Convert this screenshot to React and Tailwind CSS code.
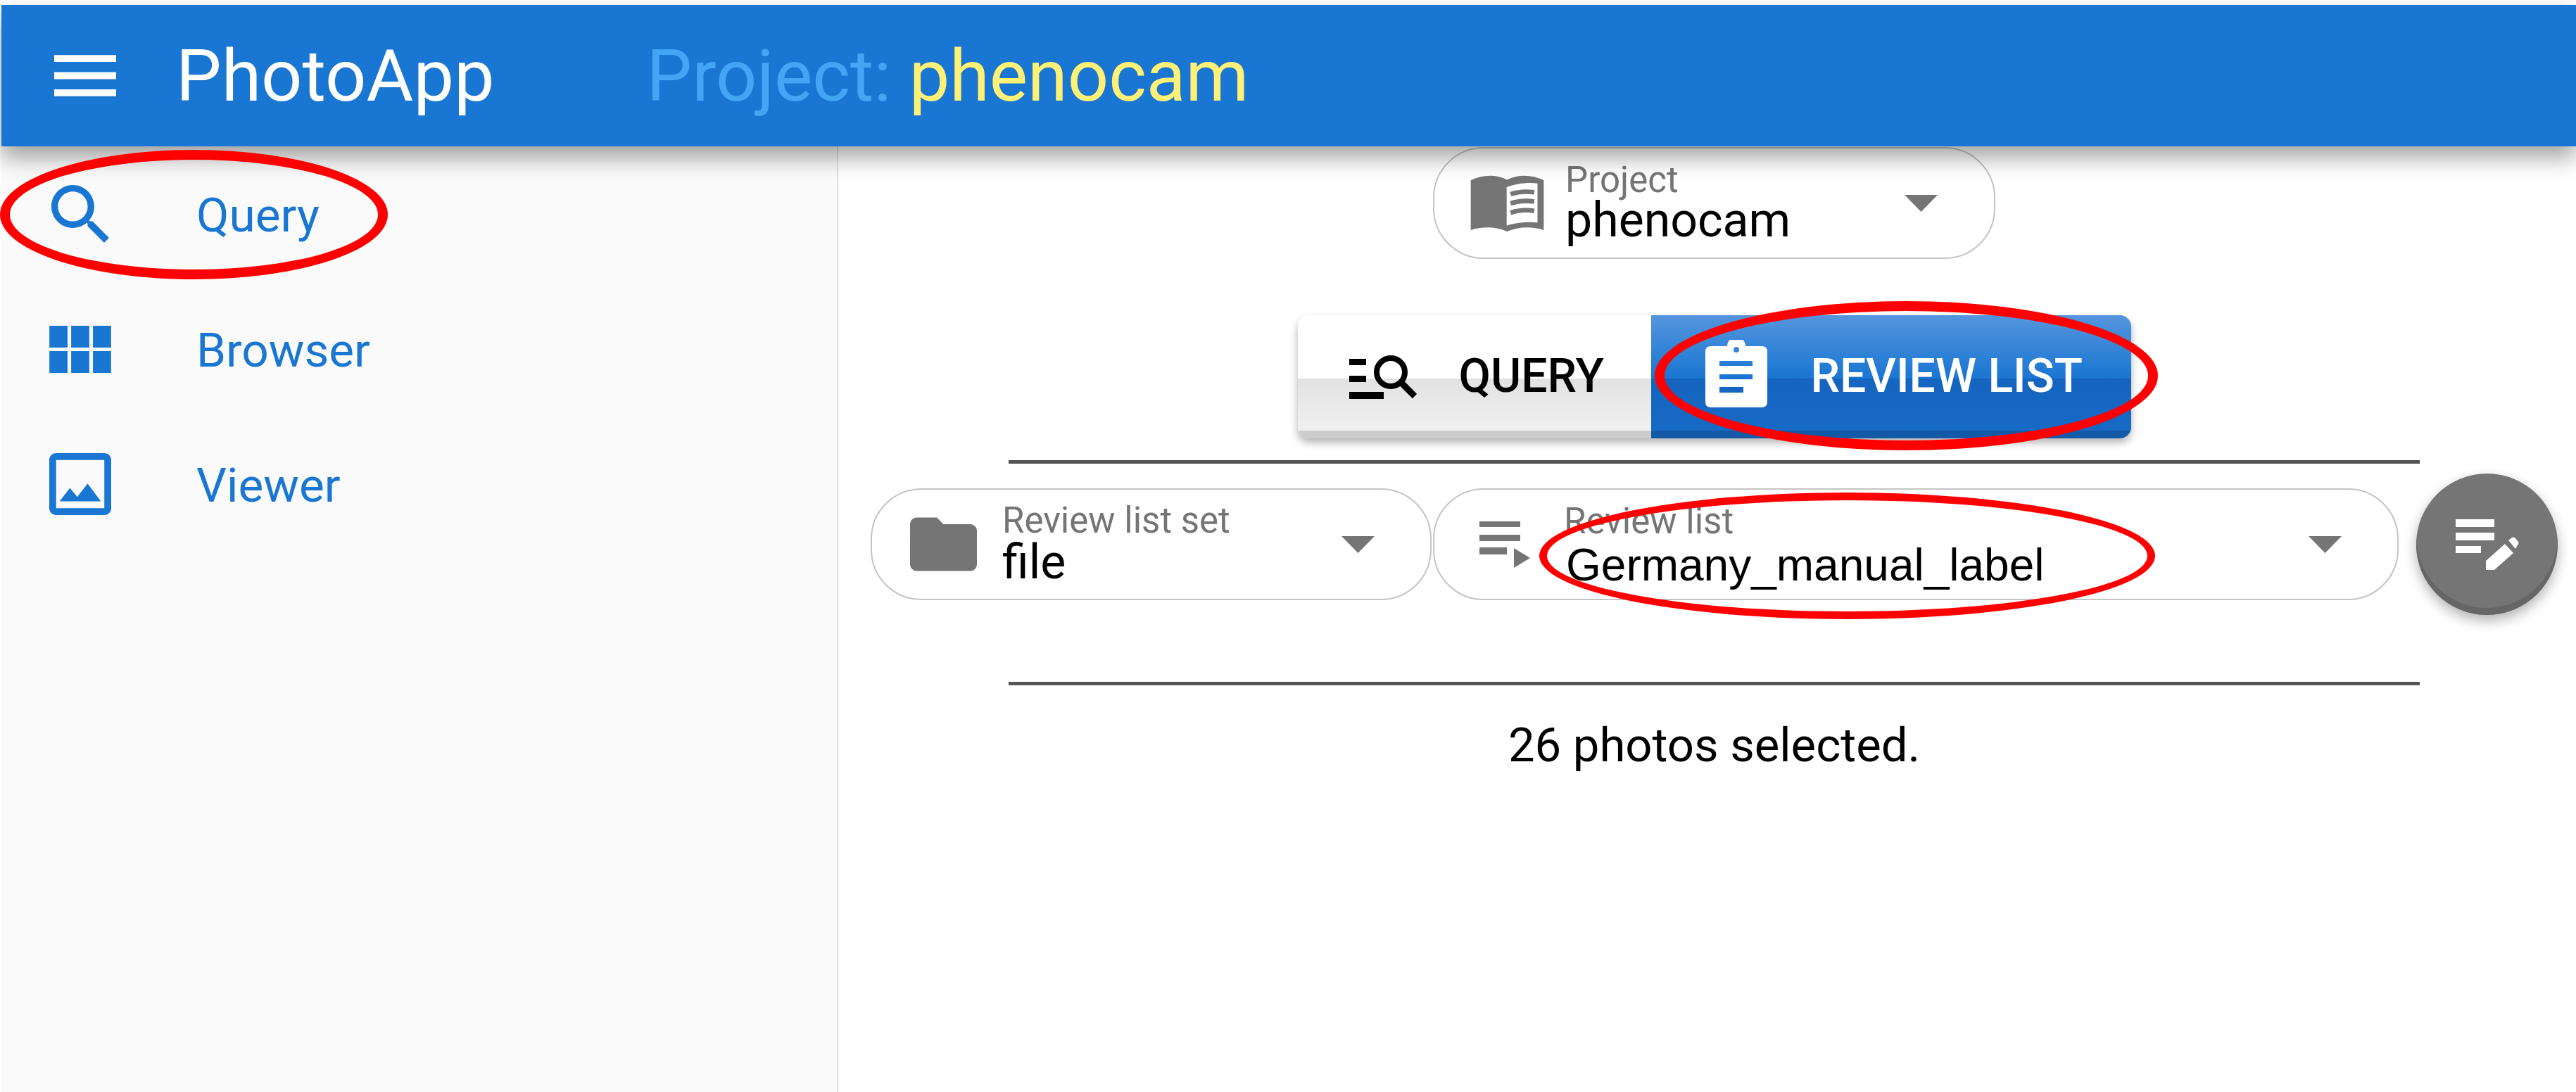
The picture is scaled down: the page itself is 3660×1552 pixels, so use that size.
import React from "react";

const Arrow = () => (
  <svg width="47" height="24" viewBox="0 0 47 24" className="shrink-0 ml-auto"><path d="M0 0H47L23.5 24Z" fill="#757575" /></svg>
);

const Pill = ({ icon, label, value, className, valueClass }) => (
  <div className={`h-[159px] border-2 border-[#c4c4c4] rounded-[72px] flex items-center bg-white shrink-0 ${className}`}>
    {icon}
    <div className="flex flex-col">
      <span className="text-[51px] leading-[49px] text-[#757575]">{label}</span>
      <span className={valueClass || "text-[68px] leading-[66px] text-black"}>{value}</span>
    </div>
    <Arrow />
  </div>
);

const NavItem = ({ icon, label }) => (
  <div className="h-[192px] flex items-center pl-[67px]">
    <div className="w-[90px] flex justify-center shrink-0">{icon}</div>
    <span className="ml-[120px] mt-[3px] text-[67.5px] text-[#1976d2]">{label}</span>
  </div>
);

export default function App() {
  return (
    <div className="relative h-[1552px] w-[3660px] overflow-hidden bg-white pt-[7px] pl-[2px] font-['Roboto',sans-serif]">
      <header className="relative z-10 h-[201px] bg-[#1976d2] flex items-center pl-[75px] shadow-[0_16px_30px_rgba(0,0,0,0.36)]">
        <svg width="88" height="59" viewBox="3 6 18 12" fill="#fff" className="shrink-0"><path d="M3 18h18v-2H3v2zm0-5h18v-2H3v2zm0-7v2h18V6H3z" /></svg>
        <span className="ml-[85px] mt-[3px] text-[102.5px] text-white">PhotoApp</span>
        <span className="ml-[216px] mt-[3px] text-[102.5px] text-[#42a5f5]">Project: <span className="text-[#fff176]">phenocam</span></span>
      </header>

      <div className="flex h-[1344px]">
        <aside className="w-[1189px] shrink-0 bg-[#fafafa] border-r-2 border-[#e0e0e0]">
          <NavItem label="Query" icon={
            <svg width="82" height="84" viewBox="3 3 17.5 17.5" fill="#1976d2"><path d="M15.5 14h-.79l-.28-.27C15.41 12.59 16 11.11 16 9.5 16 5.91 13.09 3 9.5 3S3 5.91 3 9.5 5.91 16 9.5 16c1.61 0 3.09-.59 4.23-1.57l.27.28v.79l5 4.99L20.49 19l-4.99-5zm-6 0C7.01 14 5 11.99 5 9.5S7.01 5 9.5 5 14 7.01 14 9.5 11.99 14 9.5 14z" /></svg>
          } />
          <NavItem label="Browser" icon={
            <svg width="88" height="67" viewBox="4 5 17 13" fill="#1976d2"><path d="M4 11h5V5H4v6zm0 7h5v-6H4v6zm6 0h5v-6h-5v6zm6 0h5v-6h-5v6zm-6-7h5V5h-5v6zm6-6v6h5V5h-5z" /></svg>
          } />
          <NavItem label="Viewer" icon={
            <svg width="88" height="88" viewBox="3 3 18 18" fill="#1976d2"><path d="M19 5v14H5V5h14m0-2H5c-1.1 0-2 .9-2 2v14c0 1.1.9 2 2 2h14c1.1 0 2-.9 2-2V5c0-1.1-.9-2-2-2zm-4.86 8.86l-3 3.87L9 13.14 6 17h12l-3.86-5.14z" /></svg>
          } />
        </aside>

        <main className="flex-1 pl-[46px] pr-[26px] flex flex-col items-center pt-[1px]">
          <Pill
            className="w-[799px] pl-[51px] pr-[80px]"
            label="Project"
            value="phenocam"
            icon={
              <svg width="105" height="80" viewBox="0 0 315 243" className="shrink-0 mr-[30px]">
                <path d="M0 22C50-2 110-5 157 20C205-5 265-2 315 22V237C265 220 205 222 157 243C110 222 50 220 0 237Z" fill="#757575" />
                <path d="M155 52C195 36 250 30 288 36V205C250 200 195 204 155 218Z" fill="#fff" />
                <path d="M172 82Q220 66 274 74M172 122Q220 106 274 114M172 162Q220 146 274 154" stroke="#757575" strokeWidth="20" fill="none" />
              </svg>
            }
          />

          <div className="mt-[80px] flex h-[175px] rounded-[16px] overflow-hidden shadow-[0_6px_12px_rgba(0,0,0,0.3)]">
            <div className="w-[502px] flex items-center pl-[73px] pb-[9px] bg-[linear-gradient(to_bottom,#fff_0,#fff_90px,#e2e2e2_90px,#f0f0f0_164px,#ccc_164px,#ccc_175px)]">
              <svg width="96" height="65" viewBox="1916 505 96 65" className="shrink-0 mt-[11px]">
                <path d="M1916 511H1940V520H1916ZM1916 535H1940V544H1916ZM1916 558H1965V568H1916Z" fill="#000" />
                <circle cx="1975" cy="530" r="20" stroke="#000" strokeWidth="8" fill="none" />
                <path d="M1990 545L2009 564" stroke="#000" strokeWidth="9" />
              </svg>
              <span className="ml-[60px] mt-[6px] text-[66px] font-medium text-black">QUERY</span>
            </div>
            <div className="w-[682px] flex items-center pl-[77px] pb-[9px] bg-[linear-gradient(to_bottom,#5595dd_0,#1976d2_90px,#1565c0_90px,#1669c4_164px,#1259a8_164px,#1259a8_175px)]">
              <svg width="88" height="96" viewBox="2422 482 88 96" className="shrink-0">
                <path fillRule="evenodd" fill="#fff" d="M2430 491H2453A13 13 0 0 1 2479 491H2502Q2510 491 2510 499V570Q2510 578 2502 578H2430Q2422 578 2422 570V499Q2422 491 2430 491ZM2466 492A4 4 0 1 0 2466 500A4 4 0 1 0 2466 492ZM2442 512V519H2489V512ZM2442 531V538H2489V531ZM2442 549V557H2476V549Z" />
              </svg>
              <span className="ml-[62px] mt-[6px] text-[66px] font-medium text-white">REVIEW LIST</span>
            </div>
          </div>

          <div className="mt-[31px] w-[2005px] h-[5px] bg-[#555]" />

          <div className="mt-[14px] w-full flex items-center">
            <Pill
              className="w-[797px] pl-[54px] pr-[79px]"
              label="Review list set"
              value="file"
              valueClass="pt-[2px] text-[68px] leading-[66px] text-black"
              icon={
                <svg width="95" height="77" viewBox="2 4 20 16" fill="#757575" className="shrink-0 mr-[36px]"><path d="M10 4H4c-1.1 0-1.99.9-1.99 2L2 18c0 1.1.9 2 2 2h16c1.1 0 2-.9 2-2V8c0-1.1-.9-2-2-2h-8l-2-2z" /></svg>
              }
            />
            <Pill
              className="ml-[2px] w-[1372px] pl-[64px] pr-[79px]"
              label="Review list"
              value="Germany_manual_label"
              valueClass="ml-[3px] translate-y-[5px] text-[64px] leading-[66px] text-black font-['Liberation_Sans',sans-serif]"
              icon={
                <svg width="73" height="67" viewBox="2102 746 73 67" fill="#757575" className="shrink-0 mr-[47px]">
                  <path d="M2102 747H2160V755H2102ZM2102 766H2160V775H2102ZM2102 784H2141V794H2102ZM2151 785L2174 799L2151 813Z" />
                </svg>
              }
            />
            <div className="ml-[25px] w-[201px] h-[201px] shrink-0 rounded-full bg-[#757575] flex items-center justify-center shadow-[inset_0_-10px_0_#666,0_8px_18px_rgba(0,0,0,0.3)]">
              <svg width="90" height="73" viewBox="0 0 90 73" fill="#fff">
                <path d="M0 1H55V12H0ZM0 20H55V31H0ZM0 39H36V49H0ZM43 73V60L70 36L82 49L55 73ZM75 31L80 27Q83 26 85 28L89 33Q90 36 88 38L85 43Z" />
              </svg>
            </div>
          </div>

          <div className="mt-[95px] w-[2005px] h-[5px] bg-[#555]" />
          <div className="mt-[48px] text-[67px] leading-[75px] text-black">26 photos selected.</div>
        </main>
      </div>

      <div className="absolute z-20 left-0 top-[213px] w-[551px] h-[184px] rounded-[50%] border-[14px] border-[#ff0000]" />
      <div className="absolute z-20 left-[2351px] top-[428px] w-[715px] h-[212px] rounded-[50%] border-[14px] border-[#ff0000]" />
      <div className="absolute z-20 left-[2187px] top-[700px] w-[875px] h-[180px] rounded-[50%] border-[11px] border-[#ff0000]" />
    </div>
  );
}
